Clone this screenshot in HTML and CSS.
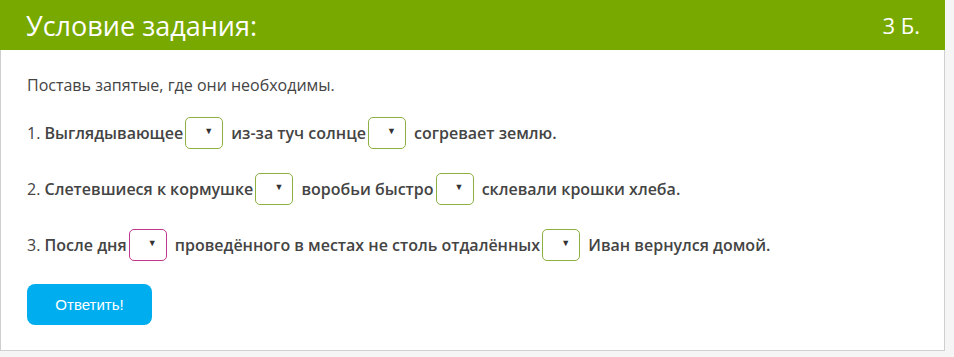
FILE: index.html
```html
<!DOCTYPE html>
<html lang="ru">
<head>
    <meta charset="UTF-8">
    <meta name="viewport" content="width=device-width, initial-scale=1.0">
    <title>Условие задания</title>
    <link rel="stylesheet" href="styles.css">
</head>
<body>
    <div class="task">
        <header class="task-head">
            <h1>Условие задания:</h1>
            <span class="points">3 Б.</span>
        </header>

        <div class="task-body">
            <p class="intro">Поставь запятые, где они необходимы.</p>

            <p class="line"><span class="num">1.</span> Выглядывающее<span class="sel"><span class="arrow">▼</span></span> из-за туч солнце<span class="sel"><span class="arrow">▼</span></span> согревает землю.</p>

            <p class="line"><span class="num">2.</span> Слетевшиеся к кормушке<span class="sel"><span class="arrow">▼</span></span> воробьи быстро<span class="sel"><span class="arrow">▼</span></span> склевали крошки хлеба.</p>

            <p class="line"><span class="num">3.</span> После дня<span class="sel wrong"><span class="arrow">▼</span></span> проведённого в местах не столь отдалённых<span class="sel"><span class="arrow">▼</span></span> Иван вернулся домой.</p>

            <button class="answer">Ответить!</button>
        </div>
    </div>
</body>
</html>
```

FILE: styles.css
```css
* { box-sizing: border-box; margin: 0; padding: 0; }
body { background: #f5f5f5; font-family: 'Open Sans', sans-serif; color: #444; }

.task { width: 945px; background: white; border: 1px solid #cfcfcf; border-top: none; height: 351px; }
.task-head { background: #77a900; color: white; height: 50px; display: flex; align-items: center; justify-content: space-between; padding: 0 25px 0 26px; margin: 0 -1px; }
.task-head h1 { font-size: 27px; font-weight: 400; }
.points { font-size: 22px; }

.task-body { padding: 22px 26px; }
.intro { font-size: 16px; line-height: 26px; margin-bottom: 18px; }
.line { font-size: 16px; font-weight: 600; line-height: 34px; margin-bottom: 22px; }
.num { font-weight: 400; }

.sel { display: inline-flex; align-items: center; justify-content: flex-end; vertical-align: middle; width: 38px; height: 32px; border: 1px solid #8db043; border-radius: 5px; margin: -4px 4px 0 2px; padding: 0 9px 4px 0; }
.sel.wrong { border-color: #c2358f; }
.arrow { font-size: 9px; color: #333; font-weight: 400; line-height: 1; }

.answer { display: block; width: 125px; height: 41px; margin-top: 3px; border: none; border-radius: 8px; background: #00aeef; color: white; font-family: 'Liberation Sans', Arial, sans-serif; font-size: 15px; cursor: pointer; }
```
